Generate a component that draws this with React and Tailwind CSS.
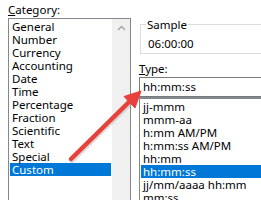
import React from "react";

const categories = [
  "General",
  "Number",
  "Currency",
  "Accounting",
  "Date",
  "Time",
  "Percentage",
  "Fraction",
  "Scientific",
  "Text",
  "Special",
  "Custom",
];

const types = [
  "jj-mmm",
  "mmm-aa",
  "h:mm AM/PM",
  "h:mm:ss AM/PM",
  "hh:mm",
  "hh:mm:ss",
  "jj/mm/aaaa hh:mm",
  "mm:ss",
];

function Row({ label, selected }) {
  return (
    <div
      className={
        "h-[13px] leading-[13px] pl-[2px] whitespace-nowrap " +
        (selected ? "bg-[#0078d7] text-white" : "text-black")
      }
    >
      {label}
    </div>
  );
}

export default function App() {
  return (
    <div
      className="relative w-[261px] h-[200px] overflow-hidden bg-white text-[11.5px] text-black"
      style={{ fontFamily: '"Noto Sans", "Open Sans", sans-serif' }}
    >
      <div className="flex gap-[8px] pl-[8px]">
        {/* Category column */}
        <div className="w-[123px] shrink-0">
          <div className="h-[18px] pt-[3px] leading-[13px]">
            <span className="underline">C</span>ategory:
          </div>
          <div className="flex h-[190px] border border-[#828790]">
            <div className="flex-1 px-[1px] py-[1px]">
              {categories.map((c) => (
                <Row key={c} label={c} selected={c === "Custom"} />
              ))}
            </div>
            <div className="w-[18px] bg-[#f0f0f0] flex justify-center pt-[6px]">
              <svg width="9" height="6" viewBox="0 0 9 6">
                <path d="M1 5 L4.5 1.5 L8 5" fill="none" stroke="#a3a3a3" strokeWidth="1.3" />
              </svg>
            </div>
          </div>
        </div>

        {/* Sample + Type column */}
        <div className="flex-1 min-w-0 -mr-[20px]">
          <fieldset className="mt-[18px] ml-[1px] border border-[#dcdcdc] pb-[3px]">
            <legend className="ml-[5px] px-[1px] leading-[13px]">Sample</legend>
            <div className="pt-[6px] pl-[7px] leading-[13px]">06:00:00</div>
          </fieldset>
          <div className="mt-[8px] leading-[13px]">
            <span className="underline">T</span>ype:
          </div>
          <div className="mt-[2px] h-[20px] border border-[#7a7a7a] pl-[3px] leading-[18px]">
            hh:mm:ss
          </div>
          <div className="h-[120px] border border-[#828790] border-t-2 pt-[1px] px-[1px]">
            {types.map((t) => (
              <Row key={t} label={t} selected={t === "hh:mm:ss"} />
            ))}
          </div>
        </div>
      </div>

      {/* red pointer arrow */}
      <svg
        className="absolute left-0 top-0 pointer-events-none"
        width="261"
        height="200"
        viewBox="0 0 261 200"
      >
        <line x1="71" y1="159" x2="129" y2="102" stroke="#b8b8b8" strokeWidth="5" strokeLinecap="round" opacity="0.5" transform="translate(1 1.5)" />
        <line x1="71" y1="159" x2="129" y2="102" stroke="#e8403a" strokeWidth="4.5" strokeLinecap="round" />
        <polygon points="141,91 135,108 124,96.5" fill="#e8403a" stroke="#e8403a" strokeWidth="1" strokeLinejoin="round" />
      </svg>
    </div>
  );
}
